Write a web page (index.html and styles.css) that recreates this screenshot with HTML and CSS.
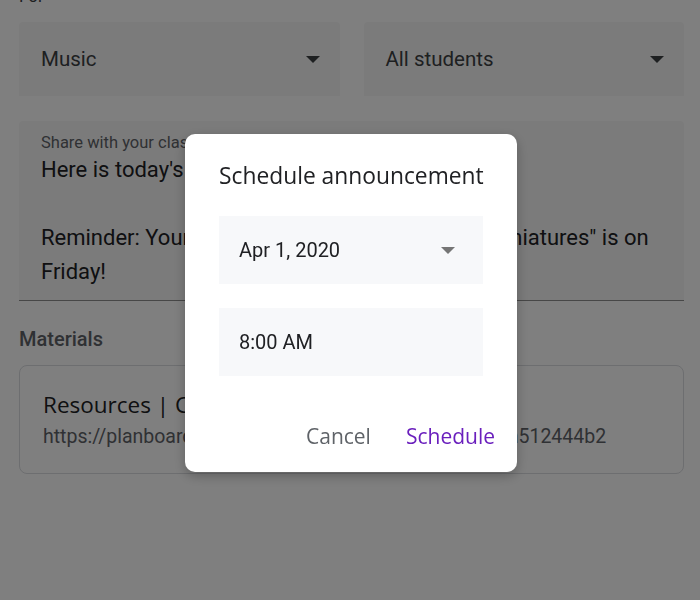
FILE: index.html
```html
<!DOCTYPE html>
<html>
<head>
<meta charset="utf-8">
<link rel="stylesheet" href="styles.css">
</head>
<body>
<main class="page">
  <div class="for-label">For</div>
  <div class="select-row">
    <div class="select">
      <span>Music</span>
      <span class="caret"></span>
    </div>
    <div class="select">
      <span>All students</span>
      <span class="caret"></span>
    </div>
  </div>
  <div class="textarea">
    <div class="ta-label">Share with your class</div>
    <div class="ta-text">Here is today's lesson plan.<br><br>Reminder: Your composition project "Musical Miniatures" is on<br>Friday!</div>
  </div>
  <div class="section-title">Materials</div>
  <div class="material">
    <div class="material-title">Resources | Classroom Planboard</div>
    <div class="material-url">https://planboard.com/resources/c2f9a17d8e5a41b0a512444b2</div>
  </div>
</main>

<div class="scrim">
  <div class="dialog">
    <h2 class="dialog-title">Schedule announcement</h2>
    <div class="field">
      <span>Apr 1, 2020</span>
      <span class="caret caret-light"></span>
    </div>
    <div class="field">
      <span>8:00 AM</span>
    </div>
    <div class="actions">
      <button class="btn btn-cancel">Cancel</button>
      <button class="btn btn-primary">Schedule</button>
    </div>
  </div>
</div>
</body>
</html>
```

FILE: styles.css
```css
* { box-sizing: border-box; }
html, body { margin: 0; padding: 0; }
body {
  width: 700px;
  height: 600px;
  overflow: hidden;
  background: #ffffff;
  font-family: Roboto, "Liberation Sans", sans-serif;
  color: #202124;
}
.page {
  padding: 0 16px 0 19px;
}
.for-label {
  margin-top: -14px;
  height: 20px;
  line-height: 20px;
  font-size: 17px;
  color: #3c4043;
}
.select-row {
  margin-top: 16px;
  display: grid;
  grid-template-columns: 1fr 1fr;
  gap: 24px;
}
.select {
  height: 74px;
  background: #f7f7f7;
  display: flex;
  align-items: center;
  justify-content: space-between;
  padding: 0 20px 0 22px;
  font-size: 20.5px;
  color: #3c4043;
  border-radius: 4px 4px 0 0;
}
.caret {
  width: 0;
  height: 0;
  border-left: 7px solid transparent;
  border-right: 7px solid transparent;
  border-top: 7px solid #3c4043;
}
.caret-light { border-top-color: #757575; margin-right: 8px; }
.textarea {
  margin-top: 25px;
  background: #f7f7f7;
  padding: 12px 22px 11px 22px;
  border-bottom: 1px solid #8e8e8e;
  border-radius: 4px 4px 0 0;
  white-space: nowrap;
  overflow: hidden;
}
.ta-label {
  font-size: 16.5px;
  line-height: 20px;
  color: #5f6368;
}
.ta-text {
  font-size: 22px;
  line-height: 34px;
  color: #202124;
}
.section-title {
  margin-top: 26px;
  font-size: 20px;
  line-height: 24px;
  font-weight: 500;
  color: #5f6368;
}
.material {
  margin-top: 14px;
  border: 1px solid #dadce0;
  border-radius: 8px;
  padding: 25px 23px 24px 23px;
  white-space: nowrap;
  overflow: hidden;
}
.material-title {
  font-family: "Open Sans", Roboto, sans-serif;
  font-weight: 500;
  font-size: 22.5px;
  line-height: 28px;
  color: #202124;
}
.material-url {
  margin-top: 6px;
  font-size: 19.5px;
  line-height: 24px;
  color: #5f6368;
}

.scrim {
  position: fixed;
  inset: 0;
  background: rgba(0, 0, 0, 0.5);
  display: flex;
  align-items: center;
  justify-content: center;
}
.dialog {
  width: 332px;
  height: 338px;
  background: #ffffff;
  border-radius: 10px;
  padding: 28px 22px 24px 34px;
  box-shadow: 0 4px 12px rgba(0,0,0,0.25);
  display: flex;
  flex-direction: column;
  transform: translate(1px, 3px);
}
.dialog-title {
  margin: 0;
  font-family: "Open Sans", Roboto, sans-serif;
  font-weight: 500;
  font-size: 22.8px;
  line-height: 28px;
  color: #202124;
  white-space: nowrap;
}
.field {
  margin-top: 26px;
  width: 264px;
  height: 68px;
  background: #f7f8fa;
  display: flex;
  align-items: center;
  justify-content: space-between;
  padding: 0 20px;
  font-size: 20px;
  color: #202124;
}
.field + .field { margin-top: 24px; }
.actions {
  margin-top: auto;
  display: flex;
  justify-content: flex-end;
  gap: 35px;
}
.btn {
  border: none;
  background: none;
  padding: 0;
  font-family: "Open Sans", Roboto, sans-serif;
  font-weight: 500;
  font-size: 21px;
  line-height: 24px;
  cursor: pointer;
}
.btn-cancel { color: #5f6368; }
.btn-primary { color: #6a1fbd; }
```
